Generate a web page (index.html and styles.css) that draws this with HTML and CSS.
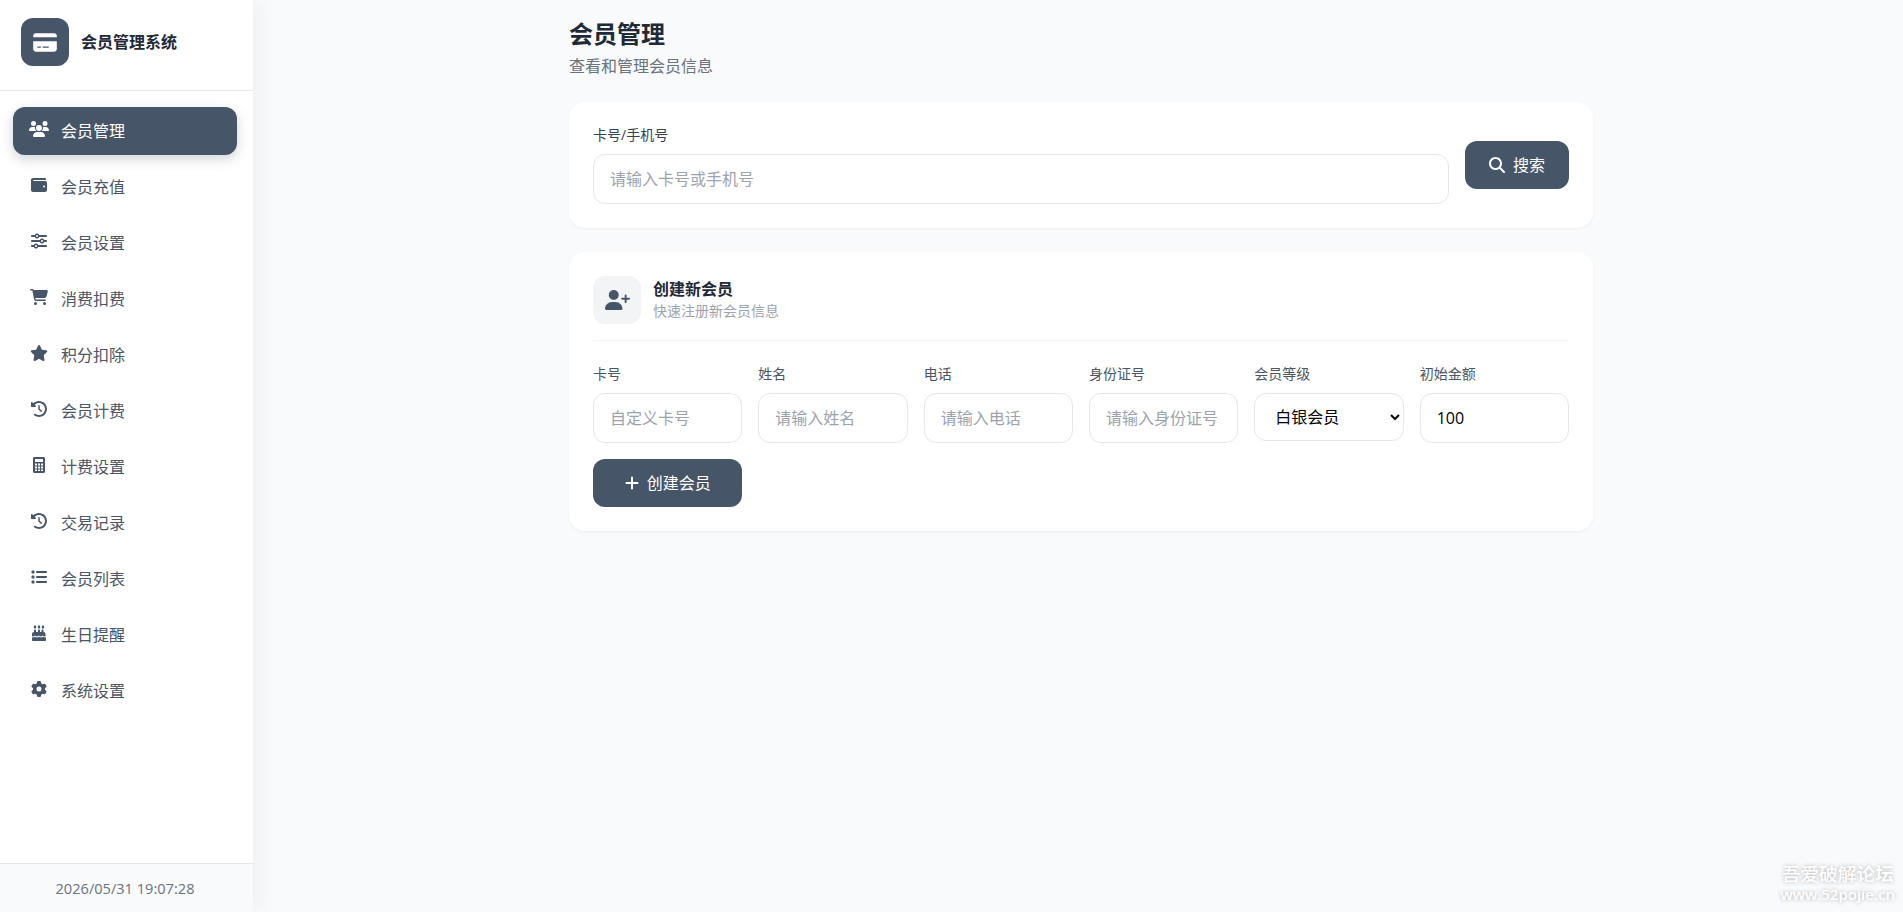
FILE: index.html
```html
<!DOCTYPE html>
<html lang="zh-CN">
<head>
<meta charset="utf-8">
<title>会员管理系统</title>
<link rel="stylesheet" href="styles.css">
</head>
<body>
<div class="app">
  <aside class="sidebar">
    <div class="brand">
      <div class="brand-logo"><svg viewBox="0 0 576 512"><path d="M64 32C28.7 32 0 60.7 0 96v32H576V96c0-35.3-28.7-64-64-64H64zM576 224H0V416c0 35.3 28.7 64 64 64H512c35.3 0 64-28.7 64-64V224zM112 352h64c8.8 0 16 7.2 16 16s-7.2 16-16 16H112c-8.8 0-16-7.2-16-16s7.2-16 16-16zm112 16c0-8.8 7.2-16 16-16H368c8.8 0 16 7.2 16 16s-7.2 16-16 16H240c-8.8 0-16-7.2-16-16z"/></svg></div>
      <span class="brand-name">会员管理系统</span>
    </div>
    <nav class="nav">
      <a class="nav-item active"><svg viewBox="0 0 640 512"><path d="M144 0a80 80 0 1 1 0 160A80 80 0 1 1 144 0zM512 0a80 80 0 1 1 0 160A80 80 0 1 1 512 0zM0 298.7C0 239.8 47.8 192 106.7 192h42.7c15.9 0 31 3.5 44.6 9.7c-1.3 7.2-1.9 14.7-1.9 22.3c0 38.2 16.8 72.5 43.3 96c-.2 0-.4 0-.7 0H21.3C9.6 320 0 310.4 0 298.7zM405.3 320c-.2 0-.4 0-.7 0c26.6-23.5 43.3-57.8 43.3-96c0-7.6-.7-15-1.9-22.3c13.6-6.3 28.7-9.7 44.6-9.7h42.7C592.2 192 640 239.8 640 298.7c0 11.8-9.6 21.3-21.3 21.3H405.3zM224 224a96 96 0 1 1 192 0 96 96 0 1 1 -192 0zM128 485.3C128 411.7 187.7 352 261.3 352H378.7C452.3 352 512 411.7 512 485.3c0 14.7-11.9 26.7-26.7 26.7H154.7c-14.7 0-26.7-11.9-26.7-26.7z"/></svg><span>会员管理</span></a>
      <a class="nav-item"><svg viewBox="0 0 512 512"><path d="M64 32C28.7 32 0 60.7 0 96V416c0 35.3 28.7 64 64 64H448c35.3 0 64-28.7 64-64V192c0-35.3-28.7-64-64-64H80c-8.8 0-16-7.2-16-16s7.2-16 16-16H448c17.7 0 32-14.3 32-32s-14.3-32-32-32H64zM416 272a32 32 0 1 1 0 64 32 32 0 1 1 0-64z"/></svg><span>会员充值</span></a>
      <a class="nav-item"><svg viewBox="0 0 512 512"><path d="M0 416c0 17.7 14.3 32 32 32l54.7 0c12.3 28.3 40.5 48 73.3 48s61-19.7 73.3-48L480 448c17.7 0 32-14.3 32-32s-14.3-32-32-32l-246.7 0c-12.3-28.3-40.5-48-73.3-48s-61 19.7-73.3 48L32 384c-17.7 0-32 14.3-32 32zm128 0a32 32 0 1 1 64 0 32 32 0 1 1 -64 0zM320 256a32 32 0 1 1 64 0 32 32 0 1 1 -64 0zm32-80c-32.8 0-61 19.7-73.3 48L32 224c-17.7 0-32 14.3-32 32s14.3 32 32 32l246.7 0c12.3 28.3 40.5 48 73.3 48s61-19.7 73.3-48l54.7 0c17.7 0 32-14.3 32-32s-14.3-32-32-32l-54.7 0c-12.3-28.3-40.5-48-73.3-48zM192 128a32 32 0 1 1 0-64 32 32 0 1 1 0 64zm73.3-64C253 35.7 224.8 16 192 16s-61 19.7-73.3 48L32 64C14.3 64 0 78.3 0 96s14.3 32 32 32l86.7 0c12.3 28.3 40.5 48 73.3 48s61-19.7 73.3-48L480 128c17.7 0 32-14.3 32-32s-14.3-32-32-32L265.3 64z"/></svg><span>会员设置</span></a>
      <a class="nav-item"><svg viewBox="0 0 576 512"><path d="M0 24C0 10.7 10.7 0 24 0H69.5c22 0 41.5 12.8 50.6 32h411c26.3 0 45.5 25 38.6 50.4l-41 152.3c-8.5 31.4-37 53.3-69.5 53.3H170.7l5.4 28.5c2.2 11.3 12.1 19.5 23.6 19.5H488c13.3 0 24 10.7 24 24s-10.7 24-24 24H199.7c-34.6 0-64.3-24.6-70.7-58.5L77.4 54.5c-.7-3.8-4-6.5-7.9-6.5H24C10.7 48 0 37.3 0 24zM128 464a48 48 0 1 1 96 0 48 48 0 1 1 -96 0zm336-48a48 48 0 1 1 0 96 48 48 0 1 1 0-96z"/></svg><span>消费扣费</span></a>
      <a class="nav-item"><svg viewBox="0 0 576 512"><path d="M316.9 18C311.6 7 300.4 0 288.1 0s-23.4 7-28.8 18L195 150.3 51.4 171.5c-12 1.8-22 10.2-25.7 21.7s-.7 24.2 7.9 32.7L137.8 329 113.2 474.7c-2 12 3 24.2 12.9 31.3s23 8 33.8 2.3l128.3-68.5 128.3 68.5c10.8 5.7 23.9 4.9 33.8-2.3s14.9-19.3 12.9-31.3L438.5 329 542.7 225.9c8.6-8.5 11.7-21.2 7.9-32.7s-13.7-19.9-25.7-21.7L381.2 150.3 316.9 18z"/></svg><span>积分扣除</span></a>
      <a class="nav-item"><svg viewBox="0 0 512 512"><path id="icon-history" d="M75 75L41 41C25.9 25.9 0 36.6 0 57.9V168c0 13.3 10.7 24 24 24H134.1c21.4 0 32.1-25.9 17-41l-30.8-30.8C155 85.5 203 64 256 64c106 0 192 86 192 192s-86 192-192 192c-40.8 0-78.6-12.7-109.7-34.4c-14.5-10.1-34.4-6.6-44.6 7.9s-6.6 34.4 7.9 44.6C151.2 495 201.7 512 256 512c141.4 0 256-114.6 256-256S397.4 0 256 0C185.3 0 121.3 28.7 75 75zm181 53c-13.3 0-24 10.7-24 24V256c0 6.4 2.5 12.5 7 17l72 72c9.4 9.4 24.6 9.4 33.9 0s9.4-24.6 0-33.9l-65-65V152c0-13.3-10.7-24-24-24z"/></svg><span>会员计费</span></a>
      <a class="nav-item"><svg viewBox="0 0 384 512"><path fill-rule="evenodd" d="M48 0C21 0 0 21 0 48V464c0 27 21 48 48 48H336c27 0 48-21 48-48V48c0-27-21-48-48-48H48zM64 64H320V160H64zM64 208h64v64H64zM160 208h64v64h-64zM256 208h64v64h-64zM64 304h64v64H64zM160 304h64v64h-64zM256 304h64v64h-64zM64 400h64v48H64zM160 400h64v48h-64zM256 400h64v48h-64z"/></svg><span>计费设置</span></a>
      <a class="nav-item"><svg viewBox="0 0 512 512"><use href="#icon-history"/></svg><span>交易记录</span></a>
      <a class="nav-item"><svg viewBox="0 0 512 512"><path d="M40 48C26.7 48 16 58.7 16 72v48c0 13.3 10.7 24 24 24H88c13.3 0 24-10.7 24-24V72c0-13.3-10.7-24-24-24H40zM192 64c-17.7 0-32 14.3-32 32s14.3 32 32 32H480c17.7 0 32-14.3 32-32s-14.3-32-32-32H192zm0 160c-17.7 0-32 14.3-32 32s14.3 32 32 32H480c17.7 0 32-14.3 32-32s-14.3-32-32-32H192zm0 160c-17.7 0-32 14.3-32 32s14.3 32 32 32H480c17.7 0 32-14.3 32-32s-14.3-32-32-32H192zM16 232v48c0 13.3 10.7 24 24 24H88c13.3 0 24-10.7 24-24V232c0-13.3-10.7-24-24-24H40c-13.3 0-24 10.7-24 24zM40 368c-13.3 0-24 10.7-24 24v48c0 13.3 10.7 24 24 24H88c13.3 0 24-10.7 24-24V392c0-13.3-10.7-24-24-24H40z"/></svg><span>会员列表</span></a>
      <a class="nav-item"><svg viewBox="0 0 448 512"><path d="M86.4 5.5L61.8 47.6C58 54.1 56 61.6 56 69.2V72c0 22.1 17.9 40 40 40s40-17.9 40-40V69.2c0-7.6-2-15-5.8-21.6L105.6 5.5C103.6 2.1 100 0 96 0s-7.6 2.1-9.6 5.5zm128 0L189.8 47.6c-3.8 6.5-5.8 14-5.8 21.6V72c0 22.1 17.9 40 40 40s40-17.9 40-40V69.2c0-7.6-2-15-5.8-21.6L233.6 5.5C231.6 2.1 228 0 224 0s-7.6 2.1-9.6 5.5zM317.8 47.6c-3.8 6.5-5.8 14-5.8 21.6V72c0 22.1 17.9 40 40 40s40-17.9 40-40V69.2c0-7.6-2-15-5.8-21.6L361.6 5.5C359.6 2.1 356 0 352 0s-7.6 2.1-9.6 5.5zM128 176c0-17.7-14.3-32-32-32s-32 14.3-32 32v48c-35.3 0-64 28.7-64 64v71c8 5 18 9 29 9c24 0 43-17 55-27c7-6 17-6 24 0c12 10 28 27 48 27s36-17 48-27c7-6 17-6 24 0c12 10 28 27 48 27s36-17 48-27c7-6 17-6 24 0c12 10 31 27 55 27c11 0 21-4 29-9v-71c0-35.3-28.7-64-64-64V176c0-17.7-14.3-32-32-32s-32 14.3-32 32v48H256V176c0-17.7-14.3-32-32-32s-32 14.3-32 32v48H128V176zM448 394c-9 4-19 6-29 6c-28 0-52-14-67-27c-15 13-37 27-64 27s-49-14-64-27c-15 13-37 27-64 27s-49-14-64-27c-15 13-39 27-67 27c-10 0-20-2-29-6v86c0 17.7 14.3 32 32 32H416c17.7 0 32-14.3 32-32V394z"/></svg><span>生日提醒</span></a>
      <a class="nav-item"><svg viewBox="0 0 512 512"><path d="M495.9 166.6c3.2 8.7 .5 18.4-6.4 24.6l-43.3 39.4c1.1 8.3 1.7 16.8 1.7 25.4s-.6 17.1-1.7 25.4l43.3 39.4c6.9 6.2 9.6 15.9 6.4 24.6c-4.4 11.9-9.7 23.3-15.8 34.3l-4.7 8.1c-6.6 11-14 21.4-22.1 31.2c-5.9 7.2-15.7 9.6-24.5 6.8l-55.7-17.7c-13.4 10.3-28.2 18.9-44 25.4l-12.5 57.1c-2 9.1-9 16.3-18.2 17.8c-13.8 2.3-28 3.5-42.5 3.5s-28.7-1.2-42.5-3.5c-9.2-1.5-16.2-8.7-18.2-17.8l-12.5-57.1c-15.8-6.5-30.6-15.1-44-25.4L83.1 425.9c-8.8 2.8-18.6 .3-24.5-6.8c-8.1-9.8-15.5-20.2-22.1-31.2l-4.7-8.1c-6.1-11-11.4-22.4-15.8-34.3c-3.2-8.7-.5-18.4 6.4-24.6l43.3-39.4C64.6 273.1 64 264.6 64 256s.6-17.1 1.7-25.4L22.4 191.2c-6.9-6.2-9.6-15.9-6.4-24.6c4.4-11.9 9.7-23.3 15.8-34.3l4.7-8.1c6.6-11 14-21.4 22.1-31.2c5.9-7.2 15.7-9.6 24.5-6.8l55.7 17.7c13.4-10.3 28.2-18.9 44-25.4l12.5-57.1c2-9.1 9-16.3 18.2-17.8C227.3 1.2 241.5 0 256 0s28.7 1.2 42.5 3.5c9.2 1.5 16.2 8.7 18.2 17.8l12.5 57.1c15.8 6.5 30.6 15.1 44 25.4l55.7-17.7c8.8-2.8 18.6-.3 24.5 6.8c8.1 9.8 15.5 20.2 22.1 31.2l4.7 8.1c6.1 11 11.4 22.4 15.8 34.3zM256 336a80 80 0 1 0 0-160 80 80 0 1 0 0 160z"/></svg><span>系统设置</span></a>
    </nav>
    <div class="clock">2026/05/31 19:07:28</div>
  </aside>
  <main class="main">
    <div class="content">
      <header class="page-head">
        <h1>会员管理</h1>
        <p>查看和管理会员信息</p>
      </header>
      <section class="card search-card">
        <div class="field search-field">
          <label>卡号/手机号</label>
          <input type="text" placeholder="请输入卡号或手机号">
        </div>
        <button class="btn search-btn"><svg viewBox="0 0 512 512"><path d="M416 208c0 45.9-14.9 88.3-40 122.7L502.6 457.4c12.5 12.5 12.5 32.8 0 45.3s-32.8 12.5-45.3 0L330.7 376c-34.4 25.2-76.8 40-122.7 40C93.1 416 0 322.9 0 208S93.1 0 208 0S416 93.1 416 208zM208 352a144 144 0 1 0 0-288 144 144 0 1 0 0 288z"/></svg><span>搜索</span></button>
      </section>
      <section class="card create-card">
        <div class="card-head">
          <div class="card-icon"><svg viewBox="0 0 640 512"><path d="M96 128a128 128 0 1 1 256 0A128 128 0 1 1 96 128zM0 482.3C0 383.8 79.8 304 178.3 304h91.4C368.2 304 448 383.8 448 482.3c0 16.4-13.3 29.7-29.7 29.7H29.7C13.3 512 0 498.7 0 482.3zM504 312V248H440c-13.3 0-24-10.7-24-24s10.7-24 24-24h64V136c0-13.3 10.7-24 24-24s24 10.7 24 24v64h64c13.3 0 24 10.7 24 24s-10.7 24-24 24H552v64c0 13.3-10.7 24-24 24s-24-10.7-24-24z"/></svg></div>
          <div class="card-titles">
            <h2>创建新会员</h2>
            <p>快速注册新会员信息</p>
          </div>
        </div>
        <div class="form-grid">
          <div class="field"><label>卡号</label><input type="text" placeholder="自定义卡号"></div>
          <div class="field"><label>姓名</label><input type="text" placeholder="请输入姓名"></div>
          <div class="field"><label>电话</label><input type="text" placeholder="请输入电话"></div>
          <div class="field"><label>身份证号</label><input type="text" placeholder="请输入身份证号"></div>
          <div class="field"><label>会员等级</label><select><option>白银会员</option></select></div>
          <div class="field"><label>初始金额</label><input type="text" value="100"></div>
          <button class="btn"><svg viewBox="0 0 448 512"><path d="M256 80c0-17.7-14.3-32-32-32s-32 14.3-32 32V224H48c-17.7 0-32 14.3-32 32s14.3 32 32 32H192V432c0 17.7 14.3 32 32 32s32-14.3 32-32V288H400c17.7 0 32-14.3 32-32s-14.3-32-32-32H256V80z"/></svg><span>创建会员</span></button>
        </div>
      </section>
    </div>
  </main>
</div>
<div class="watermark"><span>吾爱破解论坛</span><span class="watermark-url">www.52pojie.cn</span></div>
</body>
</html>
```
FILE: styles.css
```css
* { box-sizing: border-box; margin: 0; padding: 0; }
body {
  font-family: "Open Sans", "Noto Sans CJK SC", sans-serif;
  font-size: 16px;
  line-height: 24px;
  background: #f9fafb;
  color: #1f2937;
  overflow: hidden;
}
svg { fill: currentColor; display: block; flex: none; }
.app { display: flex; height: 912px; }
.sidebar {
  width: 253px;
  flex: none;
  background: #fff;
  box-shadow: 4px 0 20px rgba(0, 0, 0, .05);
  display: flex;
  flex-direction: column;
}
.brand {
  height: 91px;
  border-bottom: 1px solid #e5e7eb;
  padding: 18px 21px;
  display: flex;
  gap: 12px;
}
.brand-logo {
  width: 48px; height: 48px;
  border-radius: 12px;
  background: #475569;
  color: #fff;
  display: flex;
  align-items: center;
  justify-content: center;
}
.brand-logo svg { width: 24px; height: 21px; }
.brand-name { font-weight: 700; line-height: 48px; }
.nav {
  flex: 1;
  padding: 16px 16px 0 13px;
  display: flex;
  flex-direction: column;
  gap: 8px;
}
.nav-item {
  height: 48px;
  border-radius: 12px;
  padding: 14px 16px 10px;
  display: flex;
  gap: 12px;
  color: #4b5563;
}
.nav-item svg { width: 20px; height: 16px; }
.nav-item.active {
  background: #475569;
  color: #fff;
  box-shadow: 0 4px 12px rgba(71, 85, 105, .25);
}
.nav-item:not(.active) svg { color: #475569; }
.nav-item span { line-height: 20px; }
.clock {
  height: 49px;
  border-top: 1px solid #e5e7eb;
  background: #f9fafb;
  color: #6b7280;
  font-size: 14.6px;
  line-height: 49px;
  text-align: center;
  padding-right: 3px;
}
.main { flex: 1; }
.content { width: 1024px; margin-left: 316px; padding-top: 16px; }
.page-head { height: 86px; }
.page-head h1 { font-size: 24px; line-height: 36px; font-weight: 700; }
.page-head p { color: #6b7280; line-height: 28px; }
.card {
  background: #fff;
  border-radius: 16px;
  padding: 24px;
  box-shadow: 0 1px 3px rgba(0, 0, 0, .05);
}
.search-card { display: flex; align-items: center; gap: 16px; margin-bottom: 24px; height: 126px; }
.search-field { flex: 1; }
.field label {
  display: block;
  font-size: 14px;
  line-height: 18px;
  margin-bottom: 10px;
  color: #4b5563;
}
.search-field label { color: #374151; }
input, select {
  display: block;
  width: 100%;
  height: 50px;
  border: 1px solid #e5e7eb;
  border-radius: 12px;
  background: #fff;
  padding: 0 16px;
  font: inherit;
  color: #000;
}
select { height: 48px; }
input::placeholder { color: #9ca3af; }
.btn {
  height: 48px;
  border: 0;
  border-radius: 12px;
  background: #475569;
  color: #fff;
  font: inherit;
  display: flex;
  align-items: center;
  justify-content: center;
  gap: 8px;
}
.btn svg { height: 16px; }
.search-btn { width: 104px; }
.create-card { height: 279px; }
.card-head {
  display: flex;
  gap: 12px;
  padding-bottom: 16px;
  border-bottom: 1px solid #f3f4f6;
  margin-bottom: 24px;
}
.card-icon {
  width: 48px; height: 48px;
  border-radius: 12px;
  background: #f3f4f6;
  color: #475569;
  display: flex;
  align-items: center;
  justify-content: center;
}
.card-icon svg { width: 25px; height: 20px; }
.card-titles h2 { font-size: 16px; line-height: 26px; font-weight: 700; }
.card-titles p { font-size: 14px; line-height: 18px; color: #9ca3af; }
.form-grid { display: grid; grid-template-columns: repeat(6, minmax(0, 1fr)); gap: 16px; }
.watermark {
  position: absolute;
  right: 8px;
  bottom: 8px;
  display: flex;
  flex-direction: column;
  align-items: center;
  color: #fff;
  font-size: 18.7px;
  font-weight: 500;
  line-height: 22px;
  text-shadow: 0 0 4px rgba(0, 0, 0, .3);
}
.watermark-url { font-size: 15px; line-height: 19px; font-weight: 600; }
```
